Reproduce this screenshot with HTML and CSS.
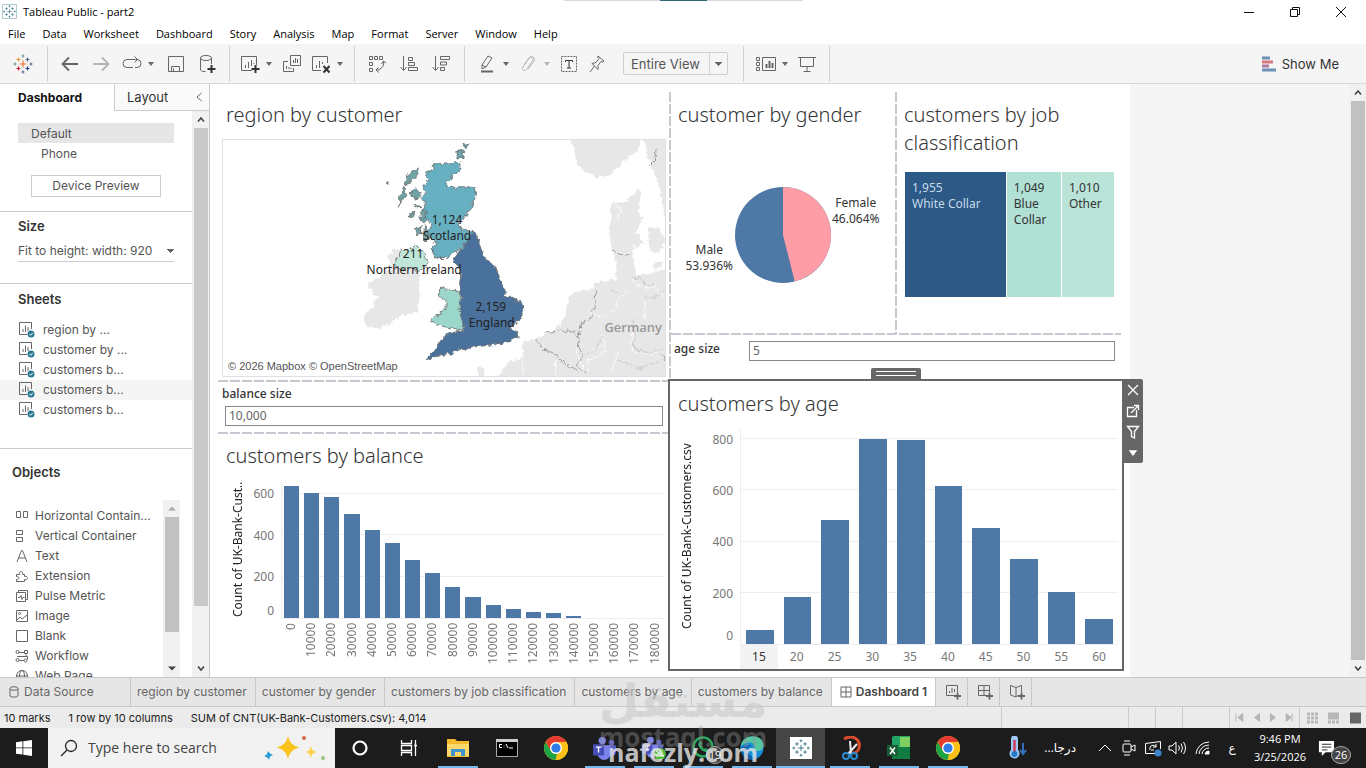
FILE: index.html
```html
<!DOCTYPE html>
<html lang="en">
<head>
<meta charset="utf-8">
<title>Tableau Public - part2</title>
<link rel="stylesheet" href="styles.css">
</head>
<body>
<svg class="defs" aria-hidden="true">
  <symbol id="chrome" viewBox="0 0 24 24"><circle cx="12" cy="12" r="12" fill="#fbc116"/><path d="M1.6 6A12 12 0 0 1 22.4 6H12a6 6 0 0 0-5.4 3.6L6.8 15Z" fill="#e33b2e"/><path d="M1.6 6 6.8 15A6 6 0 0 0 13 17.9L11.5 24A12 12 0 0 1 1.6 6Z" fill="#1ea446"/><path d="M22.4 6H12l5.2 9L11.8 24A12 12 0 0 0 22.4 6Z" fill="#fbc116"/><circle cx="12" cy="12" r="6" fill="#fff"/><circle cx="12" cy="12" r="4.6" fill="#2f7be8"/></symbol>
  <symbol id="sheet" viewBox="0 0 18 18"><path d="M9 13.5H1.5v-12h12V8M5 11V8M7.5 11V4.500M10 10V6" fill="none" stroke="#666"/><circle cx="13" cy="13" r="3.500" fill="#2b7894"/><path d="m11.300 13 1.300 1.300 2.200-2.500" fill="none" stroke="#fff"/></symbol>
  <symbol id="caret" viewBox="0 0 8 8"><path d="M1 2h6L4 6Z" fill="currentColor"/></symbol>
  <symbol id="crosses" viewBox="0 0 20 20"><g fill="none" stroke-width="1.200"><path d="M10 6.500v7M6.500 10h7" stroke="#e8762c"/><path d="M5.500 3.500v4M3.500 5.500h4" stroke="#eb9b3c"/><path d="M14.500 3.500v4M12.500 5.500h4" stroke="#5b6591"/><path d="M5.500 12.500v4M3.500 14.500h4" stroke="#c72037"/><path d="M14.500 12.500v4M12.500 14.500h4" stroke="#1f447e"/><path d="M10 .5v3M8.500 2h3M2 8.500v3M.5 10h3" stroke="#7199a6"/><path d="M18 8.500v3M16.500 10h3M10 16.500v3M8.500 18h3" stroke="#5c6692"/></g></symbol>
  <symbol id="crosses-mono" viewBox="0 0 20 20"><path d="M10 6.500v7M6.500 10h7M5.500 3.500v4M3.500 5.500h4M14.500 3.500v4M12.500 5.500h4M5.500 12.500v4M3.500 14.500h4M14.500 12.500v4M12.500 14.500h4M10 .5v3M8.500 2h3M2 8.500v3M.5 10h3M18 8.500v3M16.500 10h3M10 16.500v3M8.500 18h3" fill="none" stroke="#3b7388"/></symbol>
  <symbol id="teams" viewBox="0 0 26 26"><circle cx="10" cy="5" r="4" fill="#7b83eb"/><circle cx="20" cy="7" r="3" fill="#5059c9"/><path d="M15 10h10v7a5 5 0 0 1-9 3Z" fill="#5059c9"/><path d="M5 10h14v9a7 7 0 0 1-14 0Z" fill="#7b83eb"/><rect y="9" width="12" height="12" rx="1" fill="#464eb8"/><path d="M3 12h6M6 12v6" stroke="#fff" stroke-width="1.500"/></symbol>
</svg>

<header class="titlebar">
  <svg class="app-icon" viewBox="0 0 16 16"><path d="M.5.5h15v15H.5Z" fill="#fff" stroke="#a8c4cc"/><use href="#crosses-mono" x="1" y="1" width="14" height="14"/></svg>
  <span class="app-name">Tableau Public - part2</span>
  <i class="top-strip"></i>
  <div class="window-buttons">
    <button aria-label="Minimize"><svg viewBox="0 0 12 12"><path d="M1 6.500h10"/></svg></button>
    <button aria-label="Restore"><svg viewBox="0 0 12 12"><path d="M1.500 3.500h7v7h-7ZM3.500 3.500v-2h7v7h-2"/></svg></button>
    <button aria-label="Close"><svg viewBox="0 0 12 12"><path d="m1 1 10 10M11 1 1 11"/></svg></button>
  </div>
</header>

<nav class="menubar">
  <button>File</button><button>Data</button><button>Worksheet</button><button>Dashboard</button><button>Story</button><button>Analysis</button><button>Map</button><button>Format</button><button>Server</button><button>Window</button><button>Help</button>
</nav>

<div class="toolbar">
  <div class="tool-group first"><button aria-label="Start page"><svg><use href="#crosses"/></svg></button></div>
  <div class="tool-group">
    <button aria-label="Undo"><svg viewBox="0 0 20 20"><path d="M18 10H3M9 3.500 2.500 10 9 16.500" stroke-width="1.800"/></svg></button>
    <button aria-label="Redo" class="dim"><svg viewBox="0 0 20 20"><path d="M2 10h15M11 3.500l6.500 6.500-6.500 6.500" stroke-width="1.800"/></svg></button>
    <button aria-label="Replay" class="split"><svg viewBox="0 0 20 20"><path d="M11 13.500H5a4 4 0 0 1 0-8h10M12.500 2.500l3 3-3 3M15 5.500a4 4 0 0 1 0 8h-2"/></svg><svg class="caret"><use href="#caret"/></svg></button>
    <button aria-label="Save"><svg viewBox="0 0 20 20"><path d="M2.500 2.500h15v15h-15ZM5.500 17v-4.500h8V17M7.500 17v-2.500"/></svg></button>
    <button aria-label="New data source"><svg viewBox="0 0 20 20"><ellipse cx="9" cy="4" rx="5.500" ry="2.500"/><path d="M3.500 4v12c1 1.500 3 1.500 5 1.500M14.500 4v6"/><path d="M14.500 11v8M10.500 15h8" stroke="#333" stroke-width="2"/></svg></button>
  </div>
  <div class="tool-group tight">
    <button aria-label="New worksheet" class="split"><svg viewBox="0 0 20 20"><path d="M12 16.500H1.500v-14h15V11M5.500 14v-3M8.500 14V8M11.500 12V6M14 10V9"/><path d="M15.500 11v8M11.500 15h8" stroke="#333" stroke-width="2"/></svg><svg class="caret"><use href="#caret"/></svg></button>
    <button aria-label="Duplicate"><svg viewBox="0 0 20 20"><path d="M8.500 1.500h10v10h-10ZM6 7.500H1.500v10h10V14M4.500 15v-3M7 15v-2M9 15v-1M11.500 9V6M13.500 9V4M15.500 9V5"/></svg></button>
    <button aria-label="Clear sheet" class="split"><svg viewBox="0 0 20 20"><path d="M10 16.500H1.500v-14h15V9M5.500 14v-3M8.500 14V7M11.500 10V8"/><path d="m12.500 12 6 6.500M18.500 12l-6 6.500" stroke="#333" stroke-width="2"/></svg><svg class="caret"><use href="#caret"/></svg></button>
  </div>
  <div class="tool-group wide">
    <button aria-label="Swap"><svg viewBox="0 0 20 20"><path d="M2.500 2.500h3v3h-3ZM7.500 2.500h3v3h-3ZM12.500 2.500h3v3h-3ZM2.500 8.500h3v3h-3ZM2.500 14.500h3v3h-3ZM16.500 7.500c1 5-3 8.500-7 8.500M14.500 10l2-3 2.500 2M11.500 13.500 9 16l3 2.500"/></svg></button>
    <button aria-label="Sort ascending"><svg viewBox="0 0 20 20"><path d="M4.500 2v14M1.500 13l3 3.500 3-3.500M9.500 3.500h4v3h-4ZM9.500 8.500h6v3h-6ZM9.500 13.500h9v3h-9Z"/></svg></button>
    <button aria-label="Sort descending"><svg viewBox="0 0 20 20"><path d="M4.500 2v14M1.500 13l3 3.500 3-3.500M9.500 2.500h9v3h-9ZM9.500 8h6v3h-6ZM9.500 13.500h4v3h-4Z"/></svg></button>
  </div>
  <div class="tool-group marks">
    <button aria-label="Highlight" class="split"><svg viewBox="0 0 20 20"><path d="m5 11 6-9 4 2-6 9-4 2ZM5 11l4 2"/><path d="M4 17.500h12" stroke-width="2"/></svg><svg class="caret"><use href="#caret"/></svg></button>
    <button aria-label="Group" class="split dim"><svg viewBox="0 0 20 20"><path d="m6 11 5-7c2-2 5 0 4 2l-6 9c-2 3-6 1-4-2l6-9c3-3 7 0 5 3l-6 8"/></svg><svg class="caret"><use href="#caret"/></svg></button>
    <button aria-label="Show mark labels"><svg viewBox="0 0 20 20"><path d="M2.500 2.500h15v15h-15Z" stroke-dasharray="2 1"/><path d="M6.500 8V6.500h7V8M10 6.500V14M8 14h4" stroke="#333"/></svg></button>
    <button aria-label="Pin"><svg viewBox="0 0 20 20"><path d="m11 2 6 5-1 1-2-.5-3 4v4L5 9.500l4-1 3-4-1.500-1.500ZM7.500 12 3 18"/></svg></button>
    <select class="fit-select" aria-label="Fit"><option>Entire View</option></select>
  </div>
  <div class="tool-group show">
    <button aria-label="Show cards" class="split"><svg viewBox="0 0 20 20"><path d="M.5 3.500h3v3h-3ZM.5 8.500h3v3h-3ZM.5 13.500h3v3h-3ZM6.500 3.500h13v13h-13Z"/><path d="M10.500 14v-4M13.500 14V7M16.500 14V9" stroke-width="2"/></svg><svg class="caret"><use href="#caret"/></svg></button>
    <button aria-label="Presentation mode"><svg viewBox="0 0 20 20"><path d="M1 3.500h18M3.500 3.500v9h13v-9M10 12.500V17M6.500 17.500h7"/></svg></button>
  </div>
  <button class="show-me"><svg viewBox="0 0 16 16"><path d="M1 2h8" stroke="#6f8fb5" stroke-width="3"/><path d="M1 6h11" stroke="#d9777a" stroke-width="3"/><path d="M1 10h7" stroke="#b07aa1" stroke-width="3"/><path d="M1 14h14" stroke="#6f8fb5" stroke-width="3"/></svg>Show Me</button>
</div>

<main class="workspace">
  <aside class="sidebar">
    <div class="side-tabs"><button class="on">Dashboard</button><button class="off">Layout <svg viewBox="0 0 8 10"><path d="M6.500 1 2 5l4.500 4"/></svg></button></div>
    <div class="side-body">
      <div class="side-panels">
        <section class="devices">
          <button class="device on">Default</button>
          <button class="device phone">Phone</button>
          <button class="preview">Device Preview</button>
        </section>
        <section class="size">
          <h2><label for="size">Size</label></h2>
          <select id="size"><option>Fit to height: width: 920</option></select>
        </section>
        <section class="sheets">
          <h2>Sheets</h2>
          <ul>
            <li><svg><use href="#sheet"/></svg>region by ...</li>
            <li><svg><use href="#sheet"/></svg>customer by ...</li>
            <li><svg><use href="#sheet"/></svg>customers b...</li>
            <li class="hover"><svg><use href="#sheet"/></svg>customers b...</li>
            <li><svg><use href="#sheet"/></svg>customers b...</li>
          </ul>
        </section>
        <section class="objects">
          <h2>Objects</h2>
          <div class="object-box">
            <ul>
              <li><svg viewBox="0 0 14 14"><path d="M1.500 2.500h4v6h-4ZM8.500 2.500h4v6h-4Z"/></svg>Horizontal Contain...</li>
              <li><svg viewBox="0 0 14 14"><path d="M1.500 1.500h6v4h-6ZM1.500 8.500h6v4h-6Z"/></svg>Vertical Container</li>
              <li><svg viewBox="0 0 14 14"><path d="M2 13 6.500 1.500h1L12 13M4 9h6"/></svg>Text</li>
              <li><svg viewBox="0 0 14 14"><path d="M1.500 5.500h3c-1-4 4-4 3 0h2v2c4-1 4 4 0 3v2h-8v-2c3 1 3-4 0-3Z"/></svg>Extension</li>
              <li><svg viewBox="0 0 14 14"><path d="M3.500 3V1.500h9v9H11M1.500 3.500h9v9h-9ZM3 8.500h2l1-2 1 4 1-2h1.500"/></svg>Pulse Metric</li>
              <li><svg viewBox="0 0 14 14"><path d="M1.500 1.500h11v11h-11ZM2 11l3-3 2 2 5-4"/><circle cx="4.500" cy="4.500" r="1"/></svg>Image</li>
              <li><svg viewBox="0 0 14 14"><path d="M1.500 1.500h11v11h-11Z"/></svg>Blank</li>
              <li><svg viewBox="0 0 14 14"><path d="M4 3.500h5M9.500 1.500h3v3h-3ZM2 7.500h10.500v3M4 11.500h5M11 4.500v3"/><circle cx="2.500" cy="3" r="1.500"/><circle cx="2.500" cy="11" r="1.500"/><circle cx="10.500" cy="11.500" r="1.500"/></svg>Workflow</li>
              <li><svg viewBox="0 0 14 14"><circle cx="7" cy="7" r="5.500"/><ellipse cx="7" cy="7" rx="2.500" ry="5.500"/><path d="M1.500 7h11"/></svg>Web Page</li>
            </ul>
            <div class="scroll inner"><svg class="up" viewBox="0 0 8 8"><path d="M0 6h8L4 2Z"/></svg><i></i><svg viewBox="0 0 8 8"><path d="M0 2h8L4 6Z"/></svg></div>
          </div>
        </section>
      </div>
      <div class="scroll side"><svg viewBox="0 0 8 8"><path d="m1 6 3-3.500L7 6" class="line"/></svg><i></i><svg viewBox="0 0 8 8"><path d="m1 2 3 3.500L7 2" class="line"/></svg></div>
    </div>
  </aside>

  <div class="canvas">
    <div class="dashboard">
      <div class="col left">
        <section class="zone">
          <h1>region by customer</h1>
          <div class="map">
            <svg viewBox="222 139 444 237" preserveAspectRatio="xMidYMid slice">
              <filter id="coast" color-interpolation-filters="sRGB" x="-5%" y="-5%" width="110%" height="110%"><feTurbulence type="fractalNoise" baseFrequency=".22" numOctaves="2" seed="4"/><feDisplacementMap in="SourceGraphic" scale="6" xChannelSelector="R" yChannelSelector="G"/></filter>
              <g filter="url(#coast)" fill="#e7e7e7">
                <path d="M387 256 397 247 402 250 396 262 408 267 420 272 419 287 419 300 417 312 402 314 392 323 378 328 367 327 363 316 372 307 377 297 367 285 378 277 392 266Z"/>
                <path d="M570 136 575 150 577 162 585 170 598 177 612 173 625 160 640 148 641 136ZM644 136 650 160 658 180 663 200 668 224 672 136Z"/>
                <path d="M640 188 628 200 612 203 611 220 610 237 613 250 617 263 617 278 597 282 592 289 573 292 568 303 565 317 555 330 540 337 523 342 522 357 507 362 503 370 497 380 672 380 672 268 652 273 637 275 633 250 638 228 645 218 639 212 642 192Z"/>
                <path d="M632 235 640 233 644 243 636 247ZM649 228 660 226 665 240 660 254 650 250ZM477 366 484 368 483 376 479 376ZM655 262 664 260 662 267 654 268Z"/>
              </g>
              <g filter="url(#coast)" fill="none" stroke="#fff" stroke-width=".8"><path d="M613 203 622 208 618 220M632 280 645 288 656 286 666 298M590 312 604 318 615 310 620 298 630 290M645 320 646 302 656 298M634 326 632 350 645 354 660 352M603 334 607 352 588 360 590 374M523 342V374M556 360V376M606 343 590 352M620 350 612 372M577 348 584 372"/></g>
              <g filter="url(#coast)" fill="none" stroke="#c4c4c4" stroke-width=".8"><path d="M631 280 640 276 648 285 660 284M645 296 655 298 666 290M634 318 636 334 634 348 650 353 664 349M603 336 596 350 586 354M612 290 621 294M620 360 640 368 660 362"/></g>
              <g filter="url(#coast)" fill="none" stroke="#999"><path d="M613 250 622 254 633 255M596 290 596 305 590 320 582 322 580 334 579 345 583 356 578 366 588 374M545 333 560 330 575 332 580 342M535 338 545 350 556 354 566 365 578 370M650 164 656 158 657 147M662 354 666 360"/></g>
              <g filter="url(#coast)" stroke="#6e7274" stroke-width=".9">
                <path fill="#67b0c1" d="M434 163 446 162 460 162 460 168 452 176 446 183 450 187 458 186 470 186 476 189 476 196 471 207 464 218 457 224 464 229 473 230 470 238 462 247 452 254 445 258 436 258 432 249 437 242 430 238 428 232 432 224 428 220 423 222 421 212 425 203 421 197 426 192 423 186 428 180 425 172 432 169Z"/>
                <path fill="#70a3a5" d="M418 167 418 173 411 181 405 183 406 177 412 170ZM404 186 406 194 401 201 399 207 400 194ZM411 189 416 187 421 193 418 199 412 196ZM420 213 425 208 427 217 420 219ZM415 229 421 225 422 234 416 235ZM425 224 429 233 426 241 423 235ZM457 150 464 148 463 157 457 158ZM463 143 469 143 466 147ZM408 216 415 211 412 217ZM386 182 389 181 388 184ZM414 203 420 207 415 207Z"/>
                <path fill="#bfe6d8" d="M393 263 402 250 417 245 423 252 428 263 423 270 417 271 408 266 403 269 397 268Z"/>
                <path fill="#4a719b" d="M473 231 477 236 480 245 485 258 495 265 500 278 503 287 507 291 504 297 512 297 522 302 524 310 520 320 510 328 519 332 518 337 507 342 490 345 473 347 467 349 455 350 452 354 443 354 435 357 426 360 430 355 436 348 443 337 450 333 463 330 458 312 462 297 460 288 462 273 453 258 466 243Z"/>
                <path fill="#9bd6ca" d="M440 288 450 289 461 292 459 310 464 327 457 330 447 327 438 325 430 321 436 315 441 313 446 309 446 300 438 297Z"/>
              </g>
              <text x="634" y="332" class="country">Germany</text>
              <g class="map-label"><text x="447" y="223">1,124</text><text x="447" y="239">Scotland</text><text x="413" y="258">211</text><text x="414" y="274">Northern Ireland</text><text x="491" y="311">2,159</text><text x="492" y="327">England</text></g>
            </svg>
            <span class="credit">© 2026 Mapbox © OpenStreetMap</span>
          </div>
        </section>
        <section class="zone param-stack">
          <label for="balance">balance size</label>
          <input id="balance" type="text" value="10,000">
        </section>
        <section class="zone dashed-top">
          <h1>customers by balance</h1>
          <div class="chart balance">
            <div class="axis-title">Count of UK-Bank-Cust..</div>
            <div class="ticks"><span style="bottom:90%">600</span><span style="bottom:60%">400</span><span style="bottom:30%">200</span><span style="bottom:6%">0</span></div>
            <div class="plot">
              <i class="grid" style="bottom:90%"></i><i class="grid" style="bottom:60%"></i><i class="grid" style="bottom:30%"></i>
              <div class="bars"><b style="height:95.6%"></b><b style="height:90.5%"></b><b style="height:87.6%"></b><b style="height:75.2%"></b><b style="height:63.5%"></b><b style="height:54%"></b><b style="height:42.3%"></b><b style="height:32.8%"></b><b style="height:22.6%"></b><b style="height:15.3%"></b><b style="height:9.5%"></b><b style="height:6.6%"></b><b style="height:4.4%"></b><b style="height:3.6%"></b><b style="height:1.5%"></b><b></b><b></b><b></b><b></b></div>
            </div>
            <div class="names"><span>0</span><span>10000</span><span>20000</span><span>30000</span><span>40000</span><span>50000</span><span>60000</span><span>70000</span><span>80000</span><span>90000</span><span>100000</span><span>110000</span><span>120000</span><span>130000</span><span>140000</span><span>150000</span><span>160000</span><span>170000</span><span>180000</span></div>
          </div>
        </section>
      </div>
      <div class="col right">
        <div class="pair">
          <section class="zone gender">
            <h1>customer by gender</h1>
            <div class="pie-area">
              <p class="male">Male<br>53.936%</p>
              <svg class="pie" viewBox="-48 -48 96 96"><circle r="48" fill="#4e79a7"/><path d="M0 0V-48A48 48 0 0 1 11.750 46.540Z" fill="#ff9da7"/></svg>
              <p class="female">Female<br>46.064%</p>
            </div>
          </section>
          <section class="zone job">
            <h1>customers by job classification</h1>
            <div class="treemap" style="grid-template-columns:1955fr 1049fr 1010fr">
              <div class="white-collar">1,955<br>White Collar</div>
              <div class="blue-collar">1,049<br>Blue Collar</div>
              <div class="other">1,010<br>Other</div>
            </div>
          </section>
        </div>
        <section class="zone param-row">
          <label for="age">age size</label>
          <input id="age" type="text" value="5">
        </section>
        <section class="zone selected">
          <span class="grip"></span>
          <div class="zone-tools">
            <button aria-label="Remove"><svg viewBox="0 0 14 14"><path d="m2 2 10 10M12 2 2 12"/></svg></button>
            <button aria-label="Go to sheet"><svg viewBox="0 0 14 14"><path d="M8 3.500H1.500v9h9V6M5 9l7-7M8 1.500h4.500V6"/></svg></button>
            <button aria-label="Use as filter"><svg viewBox="0 0 14 14"><path d="M1.500 1.500h11l-4 5V13l-3-1.500v-5Z"/></svg></button>
            <button aria-label="More options"><svg viewBox="0 0 14 14"><path d="M4 5h6L7 9Z" fill="#fff"/></svg></button>
          </div>
          <h1>customers by age</h1>
          <div class="chart ages">
            <div class="axis-title">Count of UK-Bank-Customers.csv</div>
            <div class="ticks"><span style="bottom:94.7%">800</span><span style="bottom:71.1%">600</span><span style="bottom:47.4%">400</span><span style="bottom:23.6%">200</span><span style="bottom:4%">0</span></div>
            <div class="plot">
              <i class="grid" style="bottom:94.7%"></i><i class="grid" style="bottom:71.1%"></i><i class="grid" style="bottom:47.4%"></i><i class="grid" style="bottom:23.6%"></i>
              <div class="bars"><b style="height:6.5%"></b><b style="height:21.8%"></b><b style="height:57.4%"></b><b style="height:94.9%"></b><b style="height:94.4%"></b><b style="height:73.1%"></b><b style="height:53.7%"></b><b style="height:39.4%"></b><b style="height:24.1%"></b><b style="height:11.6%"></b></div>
            </div>
            <div class="names"><span class="hot">15</span><span>20</span><span>25</span><span>30</span><span>35</span><span>40</span><span>45</span><span>50</span><span>55</span><span>60</span></div>
          </div>
        </section>
      </div>
    </div>
  </div>
  <div class="scroll page"><svg viewBox="0 0 8 8"><path d="m1 6 3-3.500L7 6" class="line"/></svg><i></i><svg viewBox="0 0 8 8"><path d="m1 2 3 3.500L7 2" class="line"/></svg></div>
</main>

<nav class="sheet-tabs">
  <button class="source"><svg viewBox="0 0 10 12"><ellipse cx="5" cy="2.500" rx="4" ry="1.800"/><path d="M1 2.500v7.500c1 1.500 7 1.500 8 0V2.500"/></svg>Data Source</button>
  <button>region by customer</button><button>customer by gender</button><button>customers by job classification</button><button>customers by age</button><button>customers by balance</button>
  <button class="active"><svg viewBox="0 0 12 12"><path d="M1 1h10v10H1ZM6 1v10M1 6h10"/></svg>Dashboard 1</button>
  <button class="new" aria-label="New worksheet"><svg viewBox="0 0 16 16"><path d="M9 11.500H1.500v-10h11V8M4.500 9V7M7 9V4M9.500 8V5"/><path d="M12.500 8.500v7M9 12h7" stroke-width="1.800"/></svg></button>
  <button class="new" aria-label="New dashboard"><svg viewBox="0 0 16 16"><path d="M9 11.500H1.500v-10h11V8M7 1.500v10M1.500 6.500h11"/><path d="M12.500 8.500v7M9 12h7" stroke-width="1.800"/></svg></button>
  <button class="new" aria-label="New story"><svg viewBox="0 0 16 16"><path d="M9 11.500 7 13l-5.500-2V1.500L7 3.500l5.500-2V8M7 3.500V13"/><path d="M12.500 8.500v7M9 12h7" stroke-width="1.800"/></svg></button>
</nav>

<div class="statusbar">
  <span>10 marks</span><span>1 row by 10 columns</span><span>SUM of CNT(UK-Bank-Customers.csv): 4,014</span>
  <div class="cells"><i class="c-wide"></i><i></i><i></i><i class="c-mid"></i>
    <svg class="pager" viewBox="0 0 70 12"><path d="M8 6 13 2v8ZM6 2v8M25 6l5-4v8ZM46 6l-5-4v8ZM62 6l-5-4v8ZM63 2v8" fill="#b5b5b5" stroke="#b5b5b5"/></svg>
    <svg class="views" viewBox="0 0 66 14"><g fill="#b8b8b8"><path d="M7 2h3v3H7ZM11 2h3v3h-3ZM15 2h3v3h-3ZM7 6h3v3H7ZM11 6h3v3h-3ZM15 6h3v3h-3ZM7 10h3v3H7ZM11 10h3v3h-3ZM15 10h3v3h-3ZM28 2h11v7H28ZM28 10h3v3h-3ZM32 10h3v3h-3ZM36 10h3v3h-3Z"/></g><path d="M50 2h11v11H50Z" fill="#666"/></svg>
  </div>
</div>

<footer class="taskbar">
  <button class="start" aria-label="Start"><svg viewBox="0 0 16 16"><path d="m0 2.200 6.500-.9v6.200H0ZM7.300 1.200 16 0v7.500H7.300ZM0 8.300h6.500v6.300L0 13.700ZM7.300 8.300H16V16l-8.700-1.200Z" fill="#fff"/></svg></button>
  <div class="search">
    <svg viewBox="0 0 18 18"><circle cx="11" cy="7" r="5.500"/><path d="m7 11-6 6"/></svg>
    <input type="text" placeholder="Type here to search" aria-label="Type here to search">
    <svg class="sparkle" viewBox="0 0 64 28"><path d="M25 2c2 7 4 9 11 11.500C29 16 27 18 25 25c-2-7-4-9-11-11.500C21 11 23 9 25 2Z" fill="#fbc21b"/><path d="M48 12c1 4 2 5 5.500 6-3.500 1-4.500 2-5.500 6-1-4-2-5-5.500-6 3.500-1 4.500-2 5.500-6Z" fill="#ffd04d"/><path d="M5 17c1 2 3 3 5 4-3 1-3 2-4 5-1-3-3-3-5-4 3-1 3-2 4-5Z" fill="#2b9bd8"/><circle cx="41" cy="4" r="2" fill="#d8694b"/><circle cx="60" cy="24" r="2" fill="#9bc47b"/></svg>
  </div>
  <div class="apps">
    <button aria-label="Cortana"><svg viewBox="0 0 24 24"><circle cx="12" cy="12" r="6.500" fill="none" stroke="#fff" stroke-width="2.200"/></svg></button>
    <button aria-label="Task view"><svg viewBox="0 0 24 24"><path d="M4.500 4v3.500h10V4M4.500 9.500h10v5h-10ZM4.500 20v-3.500h10V20M18.500 4v16M17 9.500h3" fill="none" stroke="#fff" stroke-width="1.300"/></svg></button>
    <button class="run" aria-label="File Explorer"><svg viewBox="0 0 24 24"><path d="M1 3h8l2 2h12v16H1Z" fill="#f5b92e"/><path d="M1 8h22v12H1Z" fill="#ffd76b"/><path d="M5 20v-7h14v7h-4v-4H9v4Z" fill="#3e95cb"/></svg></button>
    <button aria-label="Command Prompt"><svg viewBox="0 0 24 24"><path d="M1.500 3.500h21v17h-21Z" fill="#000" stroke="#aaa"/><path d="M1 3h22v3H1Z" fill="#ccc"/><path d="M7 8.500H4.500v3H7M9 9v.5M9 11v.5M11 8l2 4M14 12h4" fill="none" stroke="#fff"/></svg></button>
    <button aria-label="Chrome"><svg><use href="#chrome"/></svg></button>
    <button class="run" aria-label="Teams"><svg><use href="#teams"/></svg></button>
    <button class="run" aria-label="Teams personal"><svg viewBox="0 0 24 24"><use href="#teams" width="22" height="22"/><circle cx="18" cy="18" r="6" fill="#4dbb35"/><path d="m14 15 8 5M14 20h8" stroke="#fff"/></svg></button>
    <button class="run" aria-label="WhatsApp"><svg viewBox="0 0 24 24"><circle cx="12" cy="11" r="9.500" fill="none" stroke="#29a85e" stroke-width="2.500"/><path d="M8 6c-3 4 4 11 8 10l1-3-3-1-1 1-3-4 1-1-1-3Z" fill="#29a85e"/></svg><em>19</em></button>
    <button class="run" aria-label="Edge"><svg viewBox="0 0 24 24"><circle cx="12" cy="12" r="11.500" fill="#168ed5"/><path d="M1 10C2-3 24-3 23.500 10c-.5 6-9 6-9 3 2-7-7-9-13.500-3Z" fill="#54c8a0"/><path d="M8 12c-3 6 4 11 12 8-8 8-18 0-19-6 0-5 7-6 11-4-2 0-3 1-4 2Z" fill="#1261ad"/></svg></button>
    <button class="run current" aria-label="Tableau"><svg viewBox="0 0 24 24"><path d="M1 1h22v22H1Z" fill="#fff"/><use href="#crosses-mono" x="3" y="3" width="18" height="18"/></svg></button>
    <button class="run" aria-label="Snipping Tool"><svg viewBox="0 0 24 24"><path d="M6 3c8-5 17 0 15 9-1 4-4 5-7 5" fill="none" stroke="#d84b28" stroke-width="3"/><path d="m12 5 1 13M19 8l-9 10" stroke="#eee" stroke-width="2"/><circle cx="8" cy="20" r="3" fill="none" stroke="#2d8bd0" stroke-width="2"/><circle cx="16" cy="20" r="3" fill="none" stroke="#2d8bd0" stroke-width="2"/></svg></button>
    <button class="run" aria-label="Excel"><svg viewBox="0 0 24 24"><path d="M5 2q0-2 2-2h16v22q0 1-2 1H5Z" fill="#21a366"/><path d="M13 1h10v10H13Z" fill="#7ed061"/><path d="M5 11h18v12H5Z" fill="#107c41"/><path d="M0 9h11v11H0Z" fill="#185c37"/><path d="m3 11.500 5 6.500M8 11.500 3 18" stroke="#fff" stroke-width="1.500"/></svg></button>
    <button class="run" aria-label="Chrome window"><svg><use href="#chrome"/></svg></button>
  </div>
  <div class="tray">
    <svg class="thermo" viewBox="0 0 20 24"><path d="M3 3a3.500 3.500 0 0 1 7 0v11a5 5 0 1 1-7 0Z" fill="#9cc9f5"/><path d="M6.500 4v13" stroke="#d43b58" stroke-width="2.500"/><circle cx="6.500" cy="18" r="3" fill="#2676c9"/><path d="M15 7v10M12 14l3 4 3-4" fill="none" stroke="#3571b9" stroke-width="2"/></svg>
    <span class="weather" lang="ar" dir="rtl">درجا...</span>
    <svg class="t-icon chevron" viewBox="0 0 18 18"><path d="m3 12 6-6 6 6"/></svg>
    <svg class="t-icon" viewBox="0 0 18 18"><rect x="3" y="5" width="8" height="8" rx="1"/><path d="m11 8 4-2v6l-4-2M4 2h6M4 16h6"/></svg>
    <svg class="t-icon" viewBox="0 0 18 18"><path d="M11 14.500H1.500v-10l15-2V10M6 11c-1-5 4-6 6-3M12 5v3H9M10 11H7"/><circle cx="14" cy="14" r="3.500" fill="#3b86cf" stroke="none"/></svg>
    <svg class="t-icon" viewBox="0 0 18 18"><path d="M1 7v4h3l4 4V3L4 7ZM10.500 6.500q2 2.500 0 5M13 4.500q3 4.500 0 9M15.500 3q4 6 0 12"/></svg>
    <svg class="t-icon wifi" viewBox="0 0 18 18"><path d="M2 15A13 13 0 0 1 15 3M5 15A10 10 0 0 1 15 6M8 15a7 7 0 0 1 7-6"/><path d="M11 15a4 4 0 0 1 4-3v3Z" fill="#fff"/></svg>
    <span class="lang" lang="ar">ع</span>
    <time>9:46 PM<br>3/25/2026</time>
    <button class="notes" aria-label="Notifications"><svg viewBox="0 0 18 18"><path d="M1 1h16v12h-9l-4 4v-4H1Z" fill="#fff"/><path d="M4 4.500h10M4 7.500h10M4 10.500h6" stroke="#222"/></svg><em>26</em></button>
  </div>
</footer>
<div class="watermark" aria-hidden="true"><span class="wm-ar" lang="ar">مستقل</span><span class="wm-one">mostaql.com</span><span class="wm-two">nafezly.com</span></div>
</body>
</html>
```
FILE: styles.css
```css
* { box-sizing: border-box; }
body {
  margin: 0; height: 100vh; min-height: 600px; overflow: hidden; position: relative;
  display: flex; flex-direction: column;
  background: #fff; color: #333;
  font: 12px/20px "Inter", sans-serif;
}
button, input, select { font: inherit; color: inherit; background: none; border: 0; margin: 0; padding: 0; border-radius: 0; }
svg { fill: none; stroke: #666; flex: none; display: block; }
h1, h2, p, ul { margin: 0; padding: 0; }
ul { list-style: none; }
em { font-style: normal; }
.defs { position: absolute; width: 0; height: 0; }
.defs symbol { stroke: none; overflow: visible; }

/* window chrome */
.titlebar { display: flex; align-items: center; height: 23px; padding: 0 2px; gap: 6px; position: relative; font-family: "Open Sans", sans-serif; font-size: 11px; color: #000; flex: none; }
.app-icon { width: 15px; height: 15px; }
.top-strip { position: absolute; top: 0; left: 41.300%; width: 17.500%; height: 1px; background: linear-gradient(90deg, #d8dadd 40%, #32687a 40% 60%, #d8dadd 60%); }
.window-buttons { display: flex; margin-left: auto; }
.window-buttons button { width: 46px; height: 22px; display: grid; place-items: center; }
.window-buttons svg { width: 12px; height: 12px; stroke: #111; }
.menubar { display: flex; gap: 17px; height: 21px; padding-left: 8px; font-family: "Open Sans", sans-serif; font-size: 11px; color: #000; flex: none; }
.menubar button { line-height: 21px; }

/* toolbar */
.toolbar { display: flex; align-items: center; height: 40px; background: #f5f5f5; border-bottom: 1px solid #d8d8d8; flex: none; }
.tool-group { display: flex; align-items: center; gap: 11px; height: 36px; padding: 0 12px; border-right: 1px solid #d2d2d2; }
.tool-group.first { padding: 0 14px 0 13px; }
.tool-group.tight { gap: 9px; padding: 0 10px; }
.tool-group.wide { gap: 12px; padding: 0 13px 0 12px; }
.tool-group.marks { gap: 8px; padding: 0 15px 0 12px; }
.tool-group.show { gap: 8px; }
.tool-group svg { width: 20px; height: 20px; }
.tool-group .split { display: flex; align-items: center; gap: 5px; }
.tool-group .caret { width: 8px; height: 8px; color: #666; stroke: none; }
.dim { opacity: .45; }
.fit-select {
  width: 105px; height: 23px; margin-left: 8px; padding-left: 7px; appearance: none;
  border: 1px solid #cfcfcf; border-radius: 2px; font-size: 13px; line-height: 20px; color: #555;
  background: linear-gradient(#666, #666) 91px 9px / 7px 1px no-repeat, linear-gradient(#666, #666) 92px 10px / 5px 1px no-repeat, linear-gradient(#666, #666) 93px 11px / 3px 1px no-repeat, linear-gradient(#666, #666) 94px 12px / 1px 1px no-repeat, linear-gradient(#d5d5d5, #d5d5d5) 85px 0 / 1px 100% no-repeat;
}
.show-me { display: flex; align-items: center; gap: 5px; margin-left: auto; padding-right: 27px; font-size: 13px; }
.show-me svg { width: 16px; height: 16px; }

/* sidebar */
.workspace { display: flex; flex: 1; min-height: 0; }
.sidebar { display: flex; flex-direction: column; width: 210px; border-right: 1px solid #ccc; flex: none; }
.side-tabs { display: flex; height: 27px; font-size: 13px; line-height: 26px; flex: none; }
.side-tabs .on { width: 114px; padding-left: 18px; text-align: left; font-weight: 700; font-size: 12px; color: #111; }
.side-tabs .off { flex: 1; display: flex; justify-content: space-between; align-items: center; padding: 0 6px 0 12px; border: solid #ccc; border-width: 0 0 1px 1px; background: #fafafa; }
.side-tabs svg { width: 8px; height: 10px; }
.side-body { display: flex; flex: 1; min-height: 0; }
.side-panels { flex: 1; display: flex; flex-direction: column; min-width: 0; font-size: 12px; color: #555; }
.side-panels section { border-top: 1px solid #ccc; flex: none; }
.side-panels .devices { border: 0; padding: 12px 18px 14px; display: flex; flex-direction: column; align-items: stretch; }
.device { height: 20px; padding: 1px 0 0 13px; text-align: left; }
.device.on { background: #e6e6e6; }
.device.phone { padding-left: 23px; }
.preview { align-self: flex-start; width: 130px; height: 22px; margin: 12px 0 0 13px; border: 1px solid #ccc; }
h2 { font-size: 13px; line-height: 20px; font-weight: 600; color: #333; }
.size { padding: 4px 18px 21px; }
.size select { display: block; width: 100%; height: 22px; margin-top: 4px; appearance: none; border-bottom: 1px solid #ccc; background: linear-gradient(#666, #666) 149px 9px / 7px 1px no-repeat, linear-gradient(#666, #666) 150px 10px / 5px 1px no-repeat, linear-gradient(#666, #666) 151px 11px / 3px 1px no-repeat, linear-gradient(#666, #666) 152px 12px / 1px 1px no-repeat; }
.sheets { padding: 5px 0 28px; }
.sheets h2 { padding-left: 18px; margin-bottom: 11px; }
.sheets li { display: flex; align-items: center; gap: 7px; padding-left: 18px; font-size: 12px; height: 20px; }
.sheets li svg { width: 18px; height: 18px; }
.sheets .hover { background: #f5f5f5; }
.side-panels .objects { flex: 1; min-height: 0; padding: 13px 12px 0; display: flex; flex-direction: column; }
.object-box { display: flex; flex: 1; min-height: 0; margin-top: 18px; overflow: hidden; }
.object-box ul { flex: 1; padding-top: 6px; white-space: nowrap; }
.object-box li { display: flex; align-items: center; gap: 6px; height: 20px; padding-left: 3px; }
.object-box li svg { width: 14px; height: 14px; }

/* scroll bars */
.scroll { display: flex; flex-direction: column; align-items: center; width: 17px; background: #f1f1f1; flex: none; }
.scroll svg { width: 8px; height: 17px; fill: #444; stroke: none; }
.scroll .line { fill: none; stroke: #444; stroke-width: 1.600; }
.scroll .up { fill: #aaa; }
.scroll i { width: 14px; background: #c1c1c1; }
.scroll svg:last-child { margin-top: auto; }
.scroll.inner i { flex: 0 1 115px; }
.scroll.side i { flex: 0 1 478px; background: #c9c9c9; }
.scroll.page i { flex: 1; }

/* dashboard */
.canvas { flex: 1; background: #f5f5f5; min-width: 0; display: flex; }
.dashboard { flex: 1; max-width: 920px; padding: 8px 8px 6px; background: #fff; display: grid; grid-template-columns: 450fr 454fr; font-family: "Noto Sans", sans-serif; }
.col { display: grid; min-width: 0; min-height: 0; }
.left { grid-template-rows: 288fr 52px 239fr; }
.right { grid-template-rows: 241fr 46px 292fr; padding-left: 1px; background: repeating-linear-gradient(180deg, #c6c9cd 0 10px, #fff 10px 12px) 1px 0 / 2px 100% no-repeat; }
.zone { display: flex; flex-direction: column; min-width: 0; min-height: 0; position: relative; }
.param-stack, .dashed-top, .param-row { background: repeating-linear-gradient(90deg, #c6c9d2 0 10px, #fff 10px 12px) 0 0 / 100% 2px no-repeat; }
h1 { padding: 9px 8px 0; font: 300 20px/28px "Noto Sans", "Open Sans", sans-serif; color: #333; flex: none; }
.dashed-top h1 { padding-top: 10px; }
.map { flex: 1; margin: 10px 2px 3px 4px; min-height: 0; border: 1px solid #e0e0e0; position: relative; }
.map > svg { width: 100%; height: 100%; position: absolute; inset: 0; stroke: none; }
.map text { text-anchor: middle; stroke: none; }
.map-label { font-size: 12px; fill: #222; }
.country { font: 600 13px "Open Sans", sans-serif; fill: #999; }
.credit { position: absolute; left: 5px; bottom: 1px; font: 11px/18px "Liberation Sans", sans-serif; color: #555; }
.param-stack { padding: 5px 4px 0; }
.zone label { font-size: 12px; line-height: 18px; color: #333; font-weight: 500; }
.zone input { border: 1px solid #888; height: 20px; padding: 0 3px; font-size: 12px; color: #666; min-width: 0; background: #fff; }
.param-stack input { margin: 3px 1px 0 3px; }
.param-row { flex-direction: row; align-items: flex-start; padding: 7px 6px 0 5px; background-position: 2px 0; margin-right: 1px; }
.param-row label { flex: none; width: 75px; }
.param-row input { flex: 1; margin-top: 1px; }
.pair { display: grid; grid-template-columns: 226fr 227fr; min-height: 0; }
.gender h1, .job h1 { padding-left: 9px; }
.job { background: repeating-linear-gradient(180deg, #c6c9cd 0 10px, #fff 10px 12px) 0 0 / 2px 100% no-repeat; }
.pie-area { display: flex; justify-content: center; flex: 1; font-size: 12px; line-height: 16px; text-align: center; padding: 7px 10px 0 11px; }
.pie { width: 96px; height: 96px; align-self: center; margin: 0 1px 0 2px; stroke: none; }
.male { align-self: center; padding-top: 47px; }
.female { align-self: center; padding-bottom: 47px; }
.treemap { display: grid; gap: 1px; flex: 1; margin: 15px 8px 36px 10px; font-size: 12px; line-height: 16px; color: #333; }
.treemap > div { min-width: 0; padding: 8px 7px; }
.treemap .white-collar { background: #2c5985; color: #c6d9ea; }
.treemap .blue-collar { background: #b1e0d5; }
.treemap .other { background: #bae4d8; }
.selected { border: 2px solid #666; margin: 0 -2px 0 -1px; background: #fff; }
.grip { position: absolute; top: -13px; left: calc(50% - 25px); width: 50px; height: 11px; border-radius: 2px 2px 0 0; background: linear-gradient(#fff, #fff) 5px 3px / 40px 1px no-repeat, linear-gradient(#fff, #fff) 5px 7px / 40px 1px no-repeat, #666; }
.zone-tools { position: absolute; left: 100%; top: -2px; width: 21px; background: #666; border-radius: 0 2px 2px 0; display: flex; flex-direction: column; align-items: center; }
.zone-tools button { height: 21px; display: grid; place-items: center; }
.zone-tools svg { width: 14px; height: 14px; stroke: #fff; stroke-width: 1.300; }

/* bar charts */
.chart { flex: 1; min-height: 0; display: grid; color: #777; font-size: 12px; }
.chart.balance { margin: 10px 3px 0 8px; grid-template: 1fr 52px / 24px 31px 1fr; }
.chart.ages { margin: 10px 4px 0 3px; grid-template: 1fr 24px / 27px 40px 1fr; }
.axis-title { grid-row: 1; writing-mode: vertical-rl; transform: rotate(180deg); text-align: center; font-size: 12px; line-height: 24px; white-space: nowrap; color: #222; justify-self: center; min-height: 0; }
.ticks { position: relative; font-size: 12px; }
.ticks span { position: absolute; right: 7px; line-height: 16px; transform: translateY(50%); }
.plot { position: relative; border-left: 1px solid #eee; border-bottom: 1px solid #eee; min-height: 0; }
.grid { position: absolute; left: 0; right: 0; height: 1px; background: #eee; }
.bars { position: relative; display: flex; height: 100%; align-items: flex-end; }
.bars b { flex: 1; background: #4e79a7 content-box; padding: 0 3px 0 2px; }
.ages .bars b { padding: 0 5px; }
.names { grid-column: 3; display: flex; }
.names span { flex: 1; text-align: center; }
.balance .names span { writing-mode: vertical-rl; transform: rotate(180deg); line-height: 20px; text-align: right; padding-bottom: 4px; }
.names .hot { background: #f3f3f3; color: #333; }
.ages .names { line-height: 24px; }

/* bottom tabs and status */
.sheet-tabs { display: flex; height: 30px; background: #e6e6e6; border: solid #c8c8c8; border-width: 1px 0; flex: none; color: #666; }
.sheet-tabs button { border-right: 1px solid #c8c8c8; padding: 0 8px 0 6px; white-space: nowrap; display: flex; align-items: center; }
.sheet-tabs .source { width: 131px; padding-left: 9px; gap: 5px; }
.sheet-tabs .source svg { width: 10px; height: 12px; }
.sheet-tabs .active { background: #fff; font-weight: 600; color: #444; gap: 4px; padding: 0 8px; }
.active svg { width: 12px; height: 12px; }
.sheet-tabs .new { width: 32px; padding: 0 0 0 9px; }
.new svg { width: 16px; height: 16px; }
.statusbar { display: flex; align-items: center; gap: 18px; height: 21px; padding-left: 4px; background: #ebebeb; font-size: 11px; color: #222; flex: none; }
.cells { display: flex; align-items: center; margin-left: auto; height: 100%; }
.cells i { width: 27px; height: 100%; border-left: 1px solid #ccc; }
.cells .c-wide { width: 127px; }
.cells .c-mid { width: 47px; }
.pager { width: 70px; height: 21px; border-left: 1px solid #ccc; stroke: none; }
.views { width: 67px; height: 21px; border-left: 1px solid #ccc; stroke: none; }

/* taskbar */
.taskbar { display: flex; height: 40px; background: #1c1c1c; color: #fff; flex: none; font-family: "Open Sans", "DejaVu Sans", sans-serif; }
.start { width: 48px; display: grid; place-items: center; }
.start svg { width: 16px; height: 16px; stroke: none; }
.search { display: flex; align-items: center; padding: 0 8px 0 12px; gap: 10px; background: #f2f2f2; flex: 0 1 287px; min-width: 0; }
.search svg { width: 18px; height: 18px; stroke: #222; stroke-width: 1.300; }
.search input { flex: 1; min-width: 0; font-size: 14px; color: #333; }
.search input::placeholder { color: #444; opacity: 1; }
.search .sparkle { width: 64px; height: 28px; stroke: none; }
.apps { display: flex; }
.apps button { width: 49px; position: relative; display: grid; place-items: center; }
.apps svg { width: 24px; height: 24px; stroke: none; }
.apps .run::after { content: ""; position: absolute; left: 5px; right: 4px; bottom: 0; height: 2px; background: #76b9ed; }
.apps .current { background: #464646; }
.apps .current::after { left: 0; right: 0; }
.apps em, .notes em { position: absolute; right: 3px; bottom: 4px; width: 18px; height: 18px; border-radius: 50%; background: #444; border: 1px solid #aaa; font-size: 11px; line-height: 16px; text-align: center; }
.tray { display: flex; align-items: center; margin-left: auto; gap: 6px; padding-right: 14px; }
.thermo { width: 20px; height: 24px; stroke: none; }
.weather { width: 42px; font-size: 12px; margin-right: 14px; }
.t-icon { width: 18px; height: 18px; stroke: #fff; }
.wifi { margin-left: 2px; }
.lang { width: 24px; padding-left: 4px; text-align: center; }
.tray time { width: 64px; font-size: 11px; line-height: 18px; text-align: center; }
.notes { position: relative; width: 34px; height: 40px; }
.notes svg { width: 17px; height: 17px; stroke: none; }
.notes em { right: 1px; bottom: 4px; width: 20px; height: 18px; }

/* overlay marks */
.watermark { position: absolute; left: 50%; bottom: 0; width: 170px; height: 92px; margin-left: -85px; pointer-events: none; font-family: "DejaVu Sans", sans-serif; text-align: center; }
.watermark span { position: absolute; left: 0; right: 0; }
.wm-ar { top: 0; font-weight: 700; font-size: 46px; line-height: 50px; color: rgb(200 200 200 / .6); }
.wm-one { bottom: 18px; font: 700 26px/26px "Open Sans", sans-serif; color: rgb(150 150 150 / .4); }
.wm-two { bottom: 3px; font: 700 25px/26px "Open Sans", sans-serif; color: rgb(235 235 235 / .8); }
```
